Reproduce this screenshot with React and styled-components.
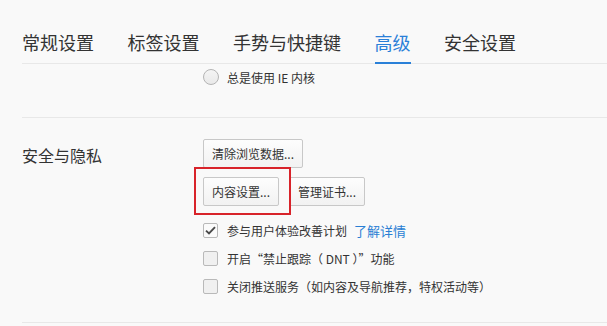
import React from "react";
import styled, { createGlobalStyle } from "styled-components";

const Global = createGlobalStyle`
  html, body {
    margin: 0;
    padding: 0;
    background: #f9f9f9;
  }
  body {
    font-family: "Noto Sans CJK SC", "Noto Sans", sans-serif;
    color: #333;
  }
`;

const Page = styled.div`
  width: 607px;
  height: 326px;
  overflow: hidden;
  box-sizing: border-box;
  padding-left: 22px;
  background: #f9f9f9;
`;

const TabBar = styled.nav`
  display: flex;
  gap: 33.5px;
  height: 63px;
  border-bottom: 1px solid #e8e8e8;
`;

const Tab = styled.div`
  box-sizing: border-box;
  height: 64px;
  padding-top: 30px;
  font-size: 18px;
  line-height: 24px;
  color: ${(p) => (p.$active ? "#2a80d8" : "#333")};
  border-bottom: 2px solid ${(p) => (p.$active ? "#2a80d8" : "transparent")};
  white-space: nowrap;
  cursor: pointer;
`;

const Section = styled.section`
  display: grid;
  grid-template-columns: 181px 1fr;
  border-bottom: 1px solid #e8e8e8;
  padding-top: ${(p) => p.$pt}px;
  padding-bottom: ${(p) => p.$pb}px;
`;

const SectionLabel = styled.div`
  font-size: 16px;
  line-height: 28px;
  padding-top: 2px;
  color: #333;
`;

const Content = styled.div`
  display: flex;
  flex-direction: column;
`;

const OptionRow = styled.label`
  display: flex;
  align-items: center;
  gap: ${(p) => p.$gap || 9}px;
  height: ${(p) => p.$h || 28}px;
  font-size: 12px;
  color: #333;
  white-space: nowrap;
`;

const Radio = styled.span`
  box-sizing: border-box;
  width: 16px;
  height: 16px;
  border-radius: 50%;
  border: 1px solid #b4b4b4;
  background: linear-gradient(#f4f4f4, #e9e9e9);
  flex: none;
`;

const Box = styled.span`
  box-sizing: border-box;
  width: 15px;
  height: 15px;
  border-radius: 2px;
  border: 1px solid #b9b9b9;
  background: ${(p) => (p.$checked ? "#fbfbfb" : "#f0f0f0")};
  display: flex;
  align-items: center;
  justify-content: center;
  flex: none;
`;

const Link = styled.a`
  font-size: 13px;
  color: #2a7fd4;
  text-decoration: none;
  margin-left: -2px;
  cursor: pointer;
`;

const ButtonRow = styled.div`
  display: flex;
  gap: 10px;
  margin-bottom: 9px;
`;

const Button = styled.button`
  box-sizing: border-box;
  height: 29px;
  padding: 0 8px;
  font-family: "Noto Sans CJK SC", "Noto Sans", sans-serif;
  font-size: 12px;
  color: #333;
  background: linear-gradient(#fdfdfd, #f2f2f2);
  border: 1px solid #c8c8c8;
  border-radius: 2px;
  white-space: nowrap;
  cursor: pointer;
`;

const Highlight = styled.span`
  position: relative;
  display: inline-flex;
  &::after {
    content: "";
    position: absolute;
    left: -9px;
    top: -10px;
    right: -12px;
    bottom: -9px;
    border: 2px solid #d8232a;
    pointer-events: none;
  }
`;

const CheckList = styled.div`
  display: flex;
  flex-direction: column;
  margin-top: 1px;
`;

const Check = () => (
  <svg width="11" height="9" viewBox="0 0 11 9">
    <path d="M1 4.6 L4 7.4 L10 1.2" fill="none" stroke="#4a4a4a" strokeWidth="1.9" />
  </svg>
);

const Checkbox = ({ checked, children }) => (
  <OptionRow>
    <Box $checked={checked}>{checked && <Check />}</Box>
    {children}
  </OptionRow>
);

export default function App() {
  const tabs = ["常规设置", "标签设置", "手势与快捷键", "高级", "安全设置"];
  return (
    <Page>
      <Global />
      <TabBar>
        {tabs.map((t) => (
          <Tab key={t} $active={t === "高级"}>
            {t}
          </Tab>
        ))}
      </TabBar>
      <Section $pt={5} $pb={32}>
        <div />
        <Content>
          <OptionRow $gap={8} $h={16}>
            <Radio />
            <span>总是使用 IE 内核</span>
          </OptionRow>
        </Content>
      </Section>
      <Section $pt={21} $pb={22}>
        <SectionLabel>安全与隐私</SectionLabel>
        <Content>
          <ButtonRow>
            <Button>清除浏览数据...</Button>
          </ButtonRow>
          <ButtonRow>
            <Highlight>
              <Button>内容设置...</Button>
            </Highlight>
            <Button>管理证书...</Button>
          </ButtonRow>
          <CheckList>
            <Checkbox checked>
              <span>参与用户体验改善计划</span>
              <Link>了解详情</Link>
            </Checkbox>
            <Checkbox>
              <span>开启“禁止跟踪（ DNT ）”功能</span>
            </Checkbox>
            <Checkbox>
              <span>关闭推送服务（如内容及导航推荐，特权活动等）</span>
            </Checkbox>
          </CheckList>
        </Content>
      </Section>
    </Page>
  );
}
